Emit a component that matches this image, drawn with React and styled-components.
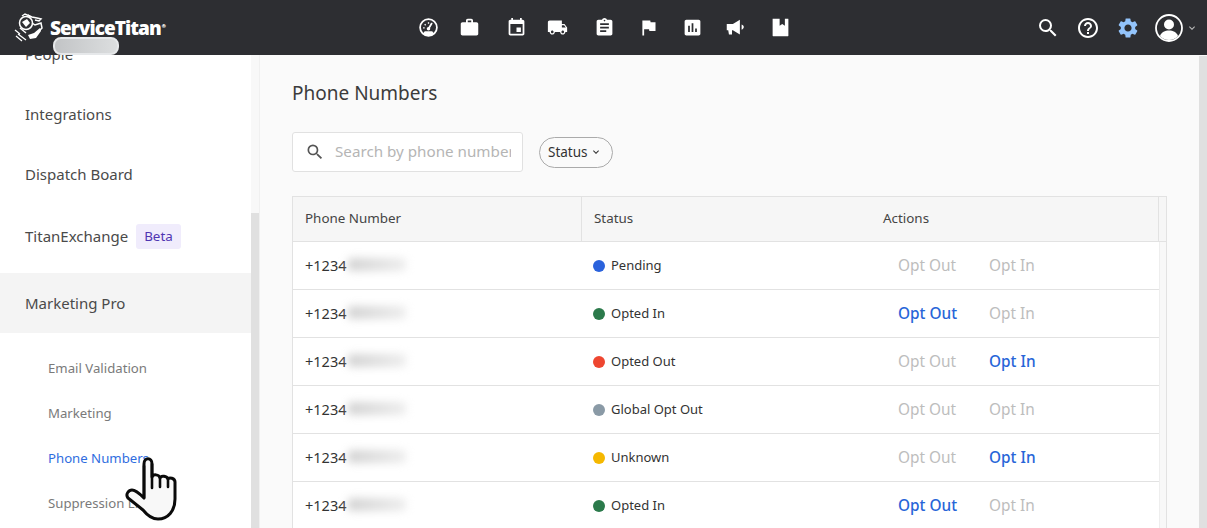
import styled, { createGlobalStyle } from "styled-components";
import {
  MdAssessment,
  MdAssignment,
  MdEvent,
  MdExpandMore,
  MdFlag,
  MdHelpOutline,
  MdLocalShipping,
  MdSearch,
  MdSettings,
  MdWork,
} from "react-icons/md";

const GlobalStyle = createGlobalStyle`
  html, body {
    margin: 0;
    height: 100%;
    overflow: hidden;
  }
  body {
    font-family: "Noto Sans", "Open Sans", sans-serif;
    color: #444;
  }
`;

const Page = styled.div`
  width: 1207px;
  height: 528px;
  display: flex;
  flex-direction: column;
  overflow: hidden;
`;

const TopBar = styled.header`
  position: relative;
  z-index: 2;
  height: 55px;
  flex: none;
  background: #2d2e32;
  display: grid;
  grid-template-columns: 400px 1fr 207px;
  align-items: center;
`;

const Brand = styled.div`
  position: relative;
  display: flex;
  align-items: center;
  height: 55px;
  padding-left: 14px;
  gap: 5px;
  color: #fff;
`;

const BrandName = styled.span`
  font-family: "Open Sans", sans-serif;
  font-size: 19px;
  font-weight: 800;
  letter-spacing: -0.95px;
  margin-top: 1px;
`;

const BrandMark = styled.sup`
  font-size: 5px;
  margin-left: 1px;
`;

const TenantPill = styled.div`
  position: absolute;
  left: 53px;
  top: 37px;
  width: 66px;
  height: 18px;
  box-sizing: border-box;
  border: 2px solid #e6e8ea;
  border-radius: 8px;
  background: linear-gradient(90deg, #c2c4c6, #dcdedf);
  filter: blur(0.5px);
`;

const NavIcons = styled.nav`
  display: flex;
  align-items: center;
  margin-left: 16px;
  color: #fff;
`;

const NavCell = styled.span`
  width: 24px;
  height: 24px;
  flex: none;
  display: flex;
  align-items: center;
  justify-content: center;
  margin-left: ${(p) => p.$gap}px;
  svg {
    display: block;
    width: 21px;
    height: 21px;
  }
`;

const UserTools = styled.div`
  display: flex;
  align-items: center;
  justify-content: flex-end;
  padding-right: 9px;
  gap: 16px;
  color: #fff;
`;

const ToolIcon = styled.span`
  display: block;
  line-height: 0;
  color: ${(p) => p.$color || "#fff"};
  font-size: 24px;
`;

const Avatar = styled.span`
  display: flex;
  align-items: center;
  gap: 2px;
  margin-left: -2px;
  color: #bbb;
  line-height: 0;
`;

const Body = styled.div`
  flex: 1;
  min-height: 0;
  display: flex;
`;

const Sidebar = styled.aside`
  width: 251px;
  flex: none;
  background: #fff;
  overflow: hidden;
`;

const SideList = styled.div`
  margin-top: -30px;
`;

const SideItem = styled.div`
  height: 60px;
  padding: 0 0 ${(p) => (p.$active ? 0 : 2)}px 25px;
  box-sizing: border-box;
  display: flex;
  align-items: center;
  gap: 8px;
  font-size: 15px;
  color: #4a4a4a;
  background: ${(p) => (p.$active ? "#f4f4f4" : "transparent")};
  margin-top: ${(p) => p.$gap || 0}px;
`;

const Beta = styled.span`
  background: #f0ecfc;
  color: #4f35b2;
  font-size: 13.4px;
  padding: 0 8px;
  height: 25px;
  line-height: 25px;
  border-radius: 3px;
`;

const SubList = styled.div`
  padding-top: 13px;
`;

const SubItem = styled.div`
  height: 45px;
  padding: 0 0 2px 48px;
  box-sizing: border-box;
  display: flex;
  align-items: center;
  font-size: 13.2px;
  color: ${(p) => (p.$active ? "#2f6de0" : "#7a7a7a")};
`;

const Scrollbar = styled.div`
  width: 8px;
  flex: none;
  background: #f8f8f8;
  padding-top: ${(p) => p.$top}px;
  box-sizing: border-box;
`;

const ScrollThumb = styled.div`
  height: 100%;
  background: #e0e0e0;
`;

const Divider = styled.div`
  width: 1px;
  flex: none;
  background: #f0f0f0;
`;

const Main = styled.main`
  flex: 1;
  min-width: 0;
  background: #fafafa;
  padding: 0 32px;
  overflow: hidden;
`;

const Title = styled.h1`
  margin: 26px 0 0;
  font-size: 19px;
  line-height: 24px;
  font-weight: 400;
  color: #3c3c3c;
`;

const Filters = styled.div`
  display: flex;
  align-items: center;
  gap: 16px;
  margin-top: 27px;
`;

const SearchBox = styled.div`
  width: 231px;
  height: 40px;
  box-sizing: border-box;
  background: #fff;
  border: 1px solid #e1e1e1;
  border-radius: 3px;
  display: flex;
  align-items: center;
  padding-left: 12px;
  gap: 10px;
  color: #555;
  font-size: 20px;
`;

const SearchInput = styled.input`
  width: 176px;
  border: 0;
  outline: 0;
  padding: 0 0 2px;
  background: transparent;
  font: inherit;
  font-size: 15.2px;
  color: #444;
  &::placeholder {
    color: #b5b5b5;
    opacity: 1;
  }
`;

const StatusChip = styled.button`
  height: 31px;
  width: 74px;
  box-sizing: border-box;
  padding: 0 0 0 8px;
  border: 1px solid #aaa;
  border-radius: 16px;
  background: #fafafa;
  display: flex;
  align-items: center;
  gap: 2px;
  font: inherit;
  font-size: 13.5px;
  color: #333;
`;

const TableFrame = styled.div`
  margin-top: 24px;
  background: #fff;
  border: 1px solid #e2e2e2;
  border-bottom: 0;
  width: 875px;
  box-sizing: border-box;
`;

const HeadRow = styled.div`
  display: grid;
  grid-template-columns: 289px 289px 288px 1fr;
  height: 45px;
  background: #f6f6f6;
  border-bottom: 1px solid #e2e2e2;
  box-sizing: border-box;
`;

const HeadCell = styled.div`
  display: flex;
  align-items: center;
  padding: 0 0 2px ${(p) => p.$pad || 12}px;
  font-size: 13.4px;
  color: #444;
  border-right: ${(p) => (p.$line ? "1px solid #e2e2e2" : "0")};
`;

const Row = styled.div`
  display: grid;
  grid-template-columns: 289px 289px 288px 1fr;
  height: 48px;
  font-size: 13px;
  color: #333;
`;

const Cell = styled.div`
  display: flex;
  align-items: center;
  box-sizing: border-box;
  padding: 0 0 2px ${(p) => p.$pad || 0}px;
  border-bottom: 1px solid #e2e2e2;
`;

const PhoneCell = styled(Cell)`
  font-size: 14.5px;
`;

const ActionCell = styled(Cell)`
  padding-bottom: 0;
`;

const GutterCell = styled.div`
  background: #f8f8f8;
  border-left: 1px solid #eee;
`;

const Blurred = styled.span`
  display: inline-block;
  width: 58px;
  height: 13px;
  margin-left: 2px;
  background: linear-gradient(90deg, #d2d2d2, #e2e2e2 60%, #eee);
  border-radius: 3px;
  filter: blur(4px);
`;

const Dot = styled.span`
  width: 12px;
  height: 12px;
  margin-top: 2px;
  border-radius: 50%;
  background: ${(p) => p.$color};
  margin-right: 6px;
`;

const ActionLink = styled.span`
  width: ${(p) => p.$width}px;
  font-size: 15.4px;
  color: ${(p) => (p.$on ? "#2765d8" : "#bdbdbd")};
  font-weight: ${(p) => (p.$on ? 500 : 400)};
`;

const Cursor = styled.svg`
  position: absolute;
  left: 124px;
  top: 456px;
  z-index: 3;
`;

const navIcons = [
  { gap: 0, icon: <GaugeIcon /> },
  { gap: 17, icon: <MdWork /> },
  { gap: 23, icon: <MdEvent /> },
  { gap: 17, icon: <MdLocalShipping /> },
  { gap: 23, icon: <MdAssignment /> },
  { gap: 20, icon: <MdFlag /> },
  { gap: 20, icon: <MdAssessment /> },
  { gap: 19, icon: <HornIcon /> },
  { gap: 21, icon: <NotebookIcon /> },
];

const rows = [
  { status: "Pending", color: "#2a62dc", out: false, in: false },
  { status: "Opted In", color: "#2b7a4b", out: true, in: false },
  { status: "Opted Out", color: "#ee4630", out: false, in: true },
  { status: "Global Opt Out", color: "#8a9aa6", out: false, in: false },
  { status: "Unknown", color: "#f5b800", out: false, in: true },
  { status: "Opted In", color: "#2b7a4b", out: true, in: false },
];

function GaugeIcon() {
  return (
    <svg viewBox="0 0 24 24" fill="none">
      <circle cx="12" cy="12" r="9.600" stroke="#fff" strokeWidth="2" />
      <path d="M5.500 18.800c1.700 1.600 4 2.500 6.500 2.500s4.800-.9 6.500-2.500l-2.300-2.600H7.800z" fill="#fff" />
      <path d="M12 13.500l3.600-6" stroke="#fff" strokeWidth="2" strokeLinecap="round" />
      <circle cx="12" cy="13.500" r="2" fill="#fff" />
      <path d="M5.800 12.500h1.800M7.600 8.200l1.200 1.200M12 6v1.800" stroke="#fff" strokeWidth="1.500" />
    </svg>
  );
}

function HornIcon() {
  return (
    <svg viewBox="0 0 24 24" fill="#fff">
      <path d="M2 8h7l8-5v17l-8-5H8v5H4.500l-.8-5H2z" />
      <path d="M19 8.500c1.500.6 2.500 1.800 2.500 3s-1 2.400-2.500 3z" />
    </svg>
  );
}

function NotebookIcon() {
  return (
    <svg viewBox="0 0 24 24" fill="#fff">
      <path d="M3 2h8v8l3-2 3 2V2h3.500c.3 0 .5.200.5.500v19c0 .3-.2.500-.5.500H3.500c-.3 0-.5-.2-.5-.5z" />
    </svg>
  );
}

function LogoGlyph() {
  return (
    <svg width="31" height="29" viewBox="0 0 31 29" fill="none" stroke="#fff" strokeWidth="1.500">
      <circle cx="12" cy="10" r="6.500" />
      <path d="M8 3l3-2 7 3 5 1 4 1-2 2-4-1M18 10l3 2 6-2 1 5-6 6-6 2M6 15l6 5" />
      <path d="M4 21l8 6M2 23l6 5M1 17l5 4" strokeWidth="1.300" />
      <path d="M14 22l6-2 6-5 1 3-5 7-6 1z" fill="#fff" stroke="none" />
      <path d="M8 9l5-3 3 4-4 4zM14 1l4 3-3 1z" fill="#fff" stroke="none" />
    </svg>
  );
}

function UserIcon() {
  return (
    <svg width="30" height="30" viewBox="0 0 30 30" fill="none">
      <circle cx="15" cy="15" r="13" stroke="#fff" strokeWidth="1.800" />
      <circle cx="15" cy="11.500" r="5" fill="#fff" />
      <path d="M6 23c1.500-4 5-5.500 9-5.500s7.500 1.500 9 5.500c-2.400 2.600-5.500 4-9 4s-6.600-1.400-9-4z" fill="#fff" />
    </svg>
  );
}

export default function App() {
  return (
    <Page>
      <GlobalStyle />
      <TopBar>
        <Brand>
          <LogoGlyph />
          <BrandName>
            ServiceTitan<BrandMark>®</BrandMark>
          </BrandName>
          <TenantPill />
        </Brand>
        <NavIcons>
          {navIcons.map((item, i) => (
            <NavCell key={i} $gap={item.gap}>{item.icon}</NavCell>
          ))}
        </NavIcons>
        <UserTools>
          <ToolIcon><MdSearch /></ToolIcon>
          <ToolIcon><MdHelpOutline /></ToolIcon>
          <ToolIcon $color="#93c4fb"><MdSettings /></ToolIcon>
          <Avatar>
            <UserIcon />
            <MdExpandMore size={12} />
          </Avatar>
        </UserTools>
      </TopBar>
      <Body>
        <Sidebar>
          <SideList>
            <SideItem>People</SideItem>
            <SideItem>Integrations</SideItem>
            <SideItem>Dispatch Board</SideItem>
            <SideItem $gap={2}>
              TitanExchange <Beta>Beta</Beta>
            </SideItem>
            <SideItem $active $gap={6}>Marketing Pro</SideItem>
            <SubList>
              <SubItem>Email Validation</SubItem>
              <SubItem>Marketing</SubItem>
              <SubItem $active>Phone Numbers</SubItem>
              <SubItem>Suppression List</SubItem>
            </SubList>
          </SideList>
        </Sidebar>
        <Scrollbar $top={158}><ScrollThumb /></Scrollbar>
        <Divider />
        <Main>
          <Title>Phone Numbers</Title>
          <Filters>
            <SearchBox>
              <MdSearch />
              <SearchInput placeholder="Search by phone number" />
            </SearchBox>
            <StatusChip>
              Status <MdExpandMore size={12} />
            </StatusChip>
          </Filters>
          <TableFrame>
            <HeadRow>
              <HeadCell $line>Phone Number</HeadCell>
              <HeadCell>Status</HeadCell>
              <HeadCell $line>Actions</HeadCell>
              <HeadCell />
            </HeadRow>
            {rows.map((row, i) => (
              <Row key={i}>
                <PhoneCell $pad={12}>
                  +1234<Blurred />
                </PhoneCell>
                <Cell $pad={11}>
                  <Dot $color={row.color} />
                  {row.status}
                </Cell>
                <ActionCell $pad={27}>
                  <ActionLink $width={91} $on={row.out}>Opt Out</ActionLink>
                  <ActionLink $width={60} $on={row.in}>Opt In</ActionLink>
                </ActionCell>
                <GutterCell />
              </Row>
            ))}
          </TableFrame>
        </Main>
        <Scrollbar $top={1}><ScrollThumb /></Scrollbar>
      </Body>
      <Cursor width="56" height="68" viewBox="0 0 56 68">
        <path
          d="M20 8c0-7 8-7 8 0v13c1-3 7-3 8 1 1-3 7-2 8 1 1-2 7-1 7 3v17c0 12-7 20-17 20-7 0-11-4-15-9L4 42c-3-4 1-8 4-8 4 0 9 5 12 8z"
          fill="#f8f8f8"
          stroke="#0a0a0a"
          strokeWidth="3"
          strokeLinejoin="round"
        />
        <path d="M28 8v24M36 22v9M44 23v8M20 42V10" stroke="#0a0a0a" strokeWidth="2.600" fill="none" strokeLinecap="round" />
      </Cursor>
    </Page>
  );
}
